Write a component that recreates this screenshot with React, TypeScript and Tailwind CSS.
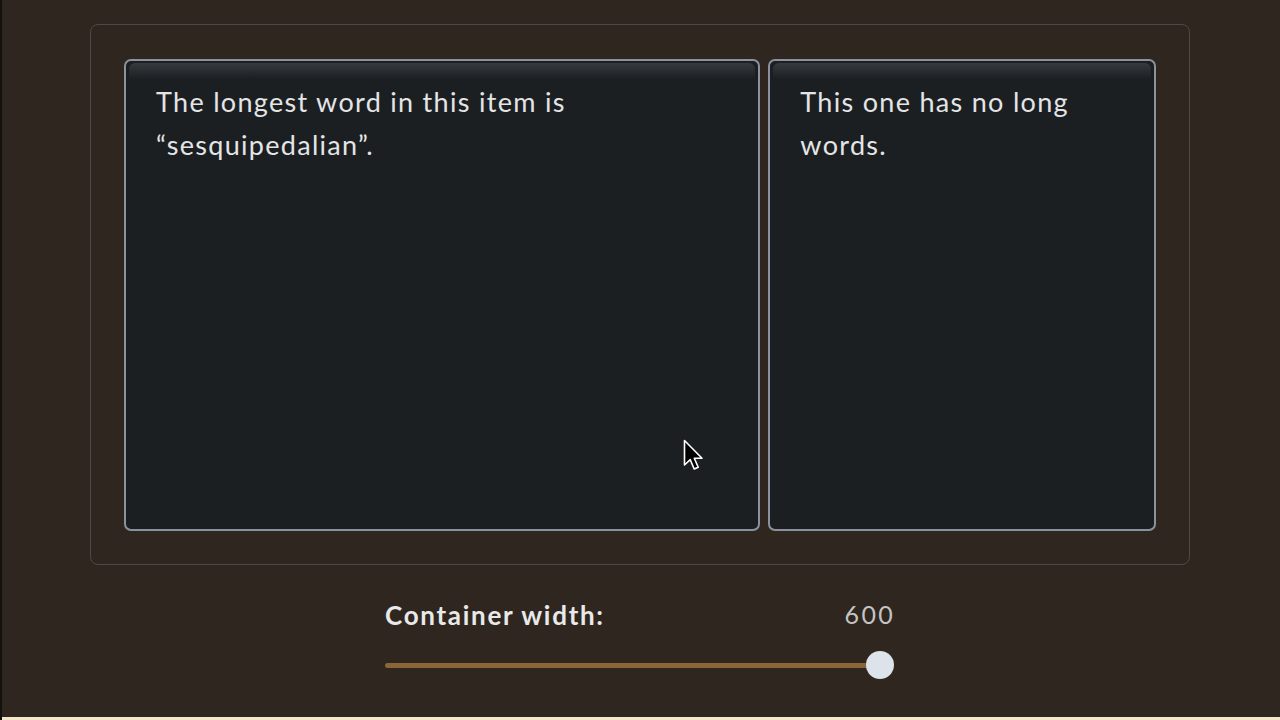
import React from "react";

export default function App() {
  return (
    <div
      className="relative w-[1280px] h-[720px] overflow-hidden bg-[#2f271f] flex flex-col border-l-2 border-[#15120e]"
      style={{ fontFamily: "Lato, 'Open Sans', sans-serif" }}
    >
      <div className="ml-[88px] mt-[24px] w-[1100px] h-[541px] border border-[#4b4a47] rounded-[8px] px-[33px] py-[34px] flex gap-[8px]">
        <Card width="w-[637px]" text="The longest word in this item is “sesquipedalian”." />
        <Card width="w-[388px]" text="This one has no long words." />
      </div>

      <div className="ml-[383px] mt-[34px] w-[510px] flex flex-col">
        <div className="flex items-center justify-between h-[32px]">
          <span className="text-[26px] font-bold text-[#e9e9ea] tracking-[1.7px]">Container width:</span>
          <span className="text-[25px] text-[#c4c4c4] tracking-[2.3px]">600</span>
        </div>
        <div className="relative mt-[19px] h-[30px] flex items-center">
          <div className="w-[492px] h-[5px] rounded-full bg-[#8a6535]" />
          <div className="absolute left-[481px] top-[1px] w-[28px] h-[28px] rounded-full bg-[#dde3ea]" />
        </div>
      </div>

      <div className="absolute left-0 bottom-0 w-full h-[3px] bg-[#f3e9c6]" />

      <svg
        className="absolute left-[681px] top-[439px]"
        width="24"
        height="34"
        viewBox="0 0 24 34"
      >
        <path
          d="M1.5 1.5 L1.5 26 L7.2 20.6 L11.2 30 L15.2 28.2 L11.3 19.2 L19 19.2 Z"
          fill="#000"
          stroke="#fff"
          strokeWidth="1.6"
          strokeLinejoin="round"
        />
      </svg>
    </div>
  );
}

function Card({ width, text }: { width: string; text: string }) {
  return (
    <div className={`${width} h-[472px] relative rounded-[7px] border-2 border-[#8a939d] bg-[#1c1f22] px-[30px] pt-[19px]`}>
      <div className="absolute left-[3px] right-[3px] top-[2px] h-[16px] rounded-t-[6px] bg-gradient-to-b from-[#363b40] to-[#1c1f22]" />
      <p className="relative text-[27px] leading-[43px] text-[#e4e5e6] tracking-[1.3px]">{text}</p>
    </div>
  );
}
